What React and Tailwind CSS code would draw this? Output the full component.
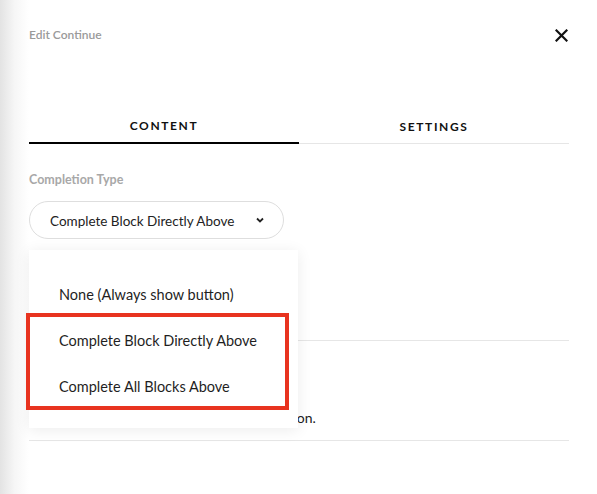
import React from "react";

const font = { fontFamily: "Lato, 'Noto Sans', sans-serif" };

const options = [
  "None (Always show button)",
  "Complete Block Directly Above",
  "Complete All Blocks Above",
];

const App = () => {
  return (
    <div className="flex h-[494px] w-full bg-white overflow-hidden" style={font}>
      {/* panel shadow edge */}
      <div className="w-[29px] shrink-0 bg-gradient-to-r from-[#e3e3e3] via-[#f6f6f6] to-white" />

      <div className="relative flex-1 pr-[28px]">
        {/* Header */}
        <div className="flex h-[70px] items-center justify-between">
          <span className="text-[12px] font-semibold text-[#9a9a9a]">Edit Continue</span>
          <svg width="13" height="13" viewBox="0 0 13 13" className="mr-[1px]">
            <path d="M1.5 1.5 L11.5 11.5 M11.5 1.5 L1.5 11.5" stroke="#111" strokeWidth="2.2" strokeLinecap="square" />
          </svg>
        </div>

        {/* Tabs */}
        <div className="mt-[40px] flex">
          <div className="flex h-[34px] flex-1 items-center justify-center border-b-2 border-black text-[12px] font-bold tracking-[1.6px] text-[#111]">
            CONTENT
          </div>
          <div className="flex h-[34px] flex-1 items-center justify-center border-b border-[#e6e6e6] text-[12px] font-bold tracking-[1.6px] text-[#111]">
            SETTINGS
          </div>
        </div>

        {/* Completion type */}
        <div className="mt-[28px] text-[12.5px] font-bold leading-[16px] text-[#a8a8a8]">Completion Type</div>
        <div className="mt-[13px] flex h-[38px] w-[255px] items-center justify-between rounded-full border border-[#dedede] pl-[20px] pr-[19px]">
          <span className="pt-[2px] text-[13.5px] text-[#222]">Complete Block Directly Above</span>
          <svg width="8" height="6" viewBox="0 0 8 6">
            <path d="M1 1.5 L4 4.5 L7 1.5" stroke="#222" strokeWidth="1.8" fill="none" />
          </svg>
        </div>

        <div className="mt-[101px] border-t border-[#e6e6e6]" />
        <div className="mt-[67px] text-[14px] leading-[20px] tracking-[-0.08px] text-[#222]">
          Require completion of blocks above the button.
        </div>
        <div className="mt-[12px] border-t border-[#e6e6e6]" />

        {/* Dropdown menu */}
        <div className="absolute left-0 top-[250px] h-[178px] w-[269px] bg-white pt-[21px] shadow-[0_2px_14px_rgba(0,0,0,0.08)]">
          {options.map((o) => (
            <div key={o} className="flex h-[46px] items-center pl-[30px] pt-[2px] text-[14.5px] text-[#1f1f1f]">
              {o}
            </div>
          ))}
        </div>

        {/* highlight annotation */}
        <div className="absolute left-[-3px] top-[313px] h-[97px] w-[263px] border-[4px] border-[#e8331f]" />
      </div>
    </div>
  );
};

export default App;
